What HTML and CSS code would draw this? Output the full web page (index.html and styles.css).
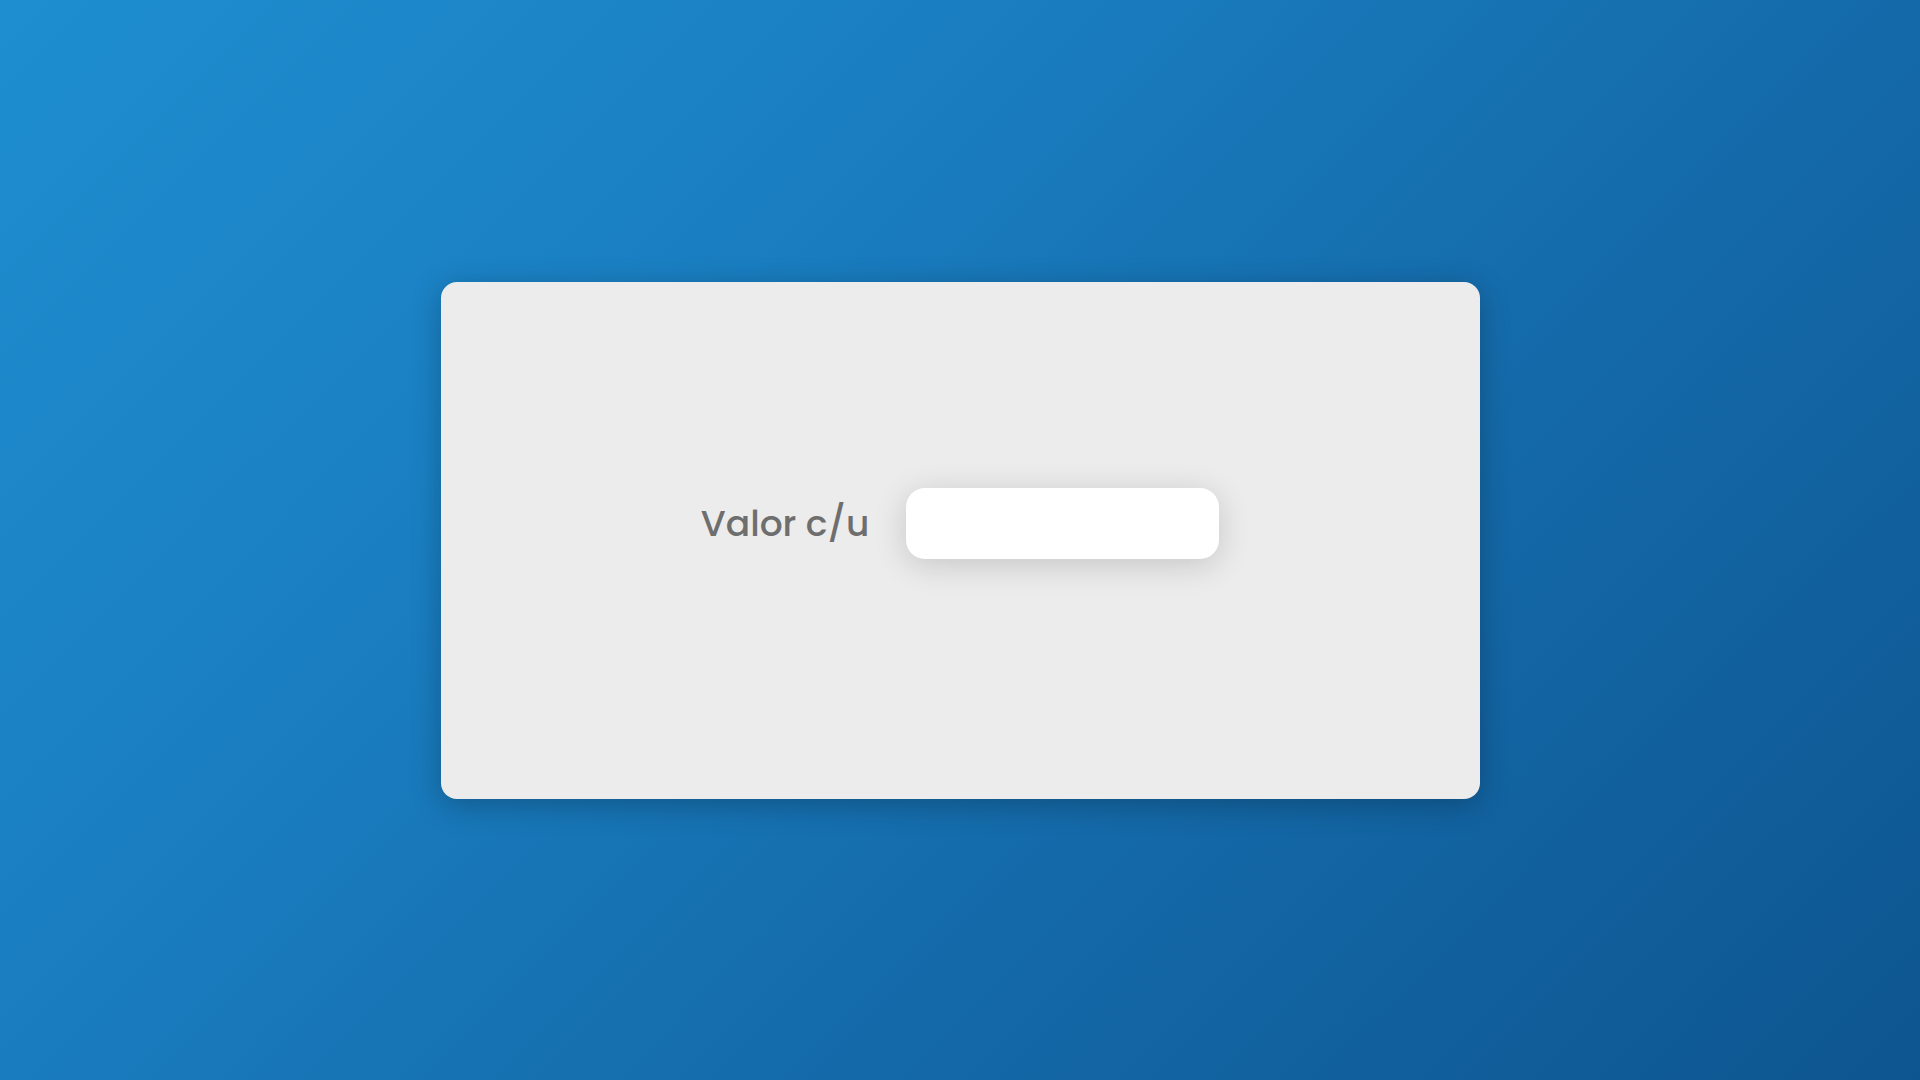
FILE: index.html
```html
<!DOCTYPE html>
<html lang="es">
<head>
<meta charset="utf-8">
<title>Valor</title>
<link rel="stylesheet" href="styles.css">
</head>
<body>
<main class="page">
  <section class="card">
    <div class="field">
      <label class="label" for="valor">Valor c/u</label>
      <input class="input" id="valor" type="text">
    </div>
  </section>
</main>
</body>
</html>
```
FILE: styles.css
```css
* { box-sizing: border-box; }
html, body { margin: 0; height: 100%; }
body {
  font-family: "Poppins", "Lato", "Open Sans", sans-serif;
  background: linear-gradient(135deg, #1e8ed0 0%, #1a80c3 30%, #1469a8 65%, #0d5590 100%);
}
.page {
  height: 100vh;
  display: flex;
  align-items: center;
  justify-content: center;
}
.card {
  width: 1039px;
  height: 517px;
  background: #ececec;
  border-radius: 16px;
  box-shadow: 0 6px 30px rgba(0, 0, 0, 0.25);
  display: flex;
  justify-content: center;
  padding-top: 206px;
}
.field {
  display: flex;
  align-items: center;
  gap: 37px;
  height: 71px;
}
.label {
  font-size: 36px;
  color: #6e6e6e;
  font-weight: 500;
}
.input {
  width: 313px;
  height: 71px;
  border: none;
  border-radius: 19px;
  background: #fff;
  box-shadow: 0 6px 32px rgba(0, 0, 0, 0.16);
  outline: none;
}
```
